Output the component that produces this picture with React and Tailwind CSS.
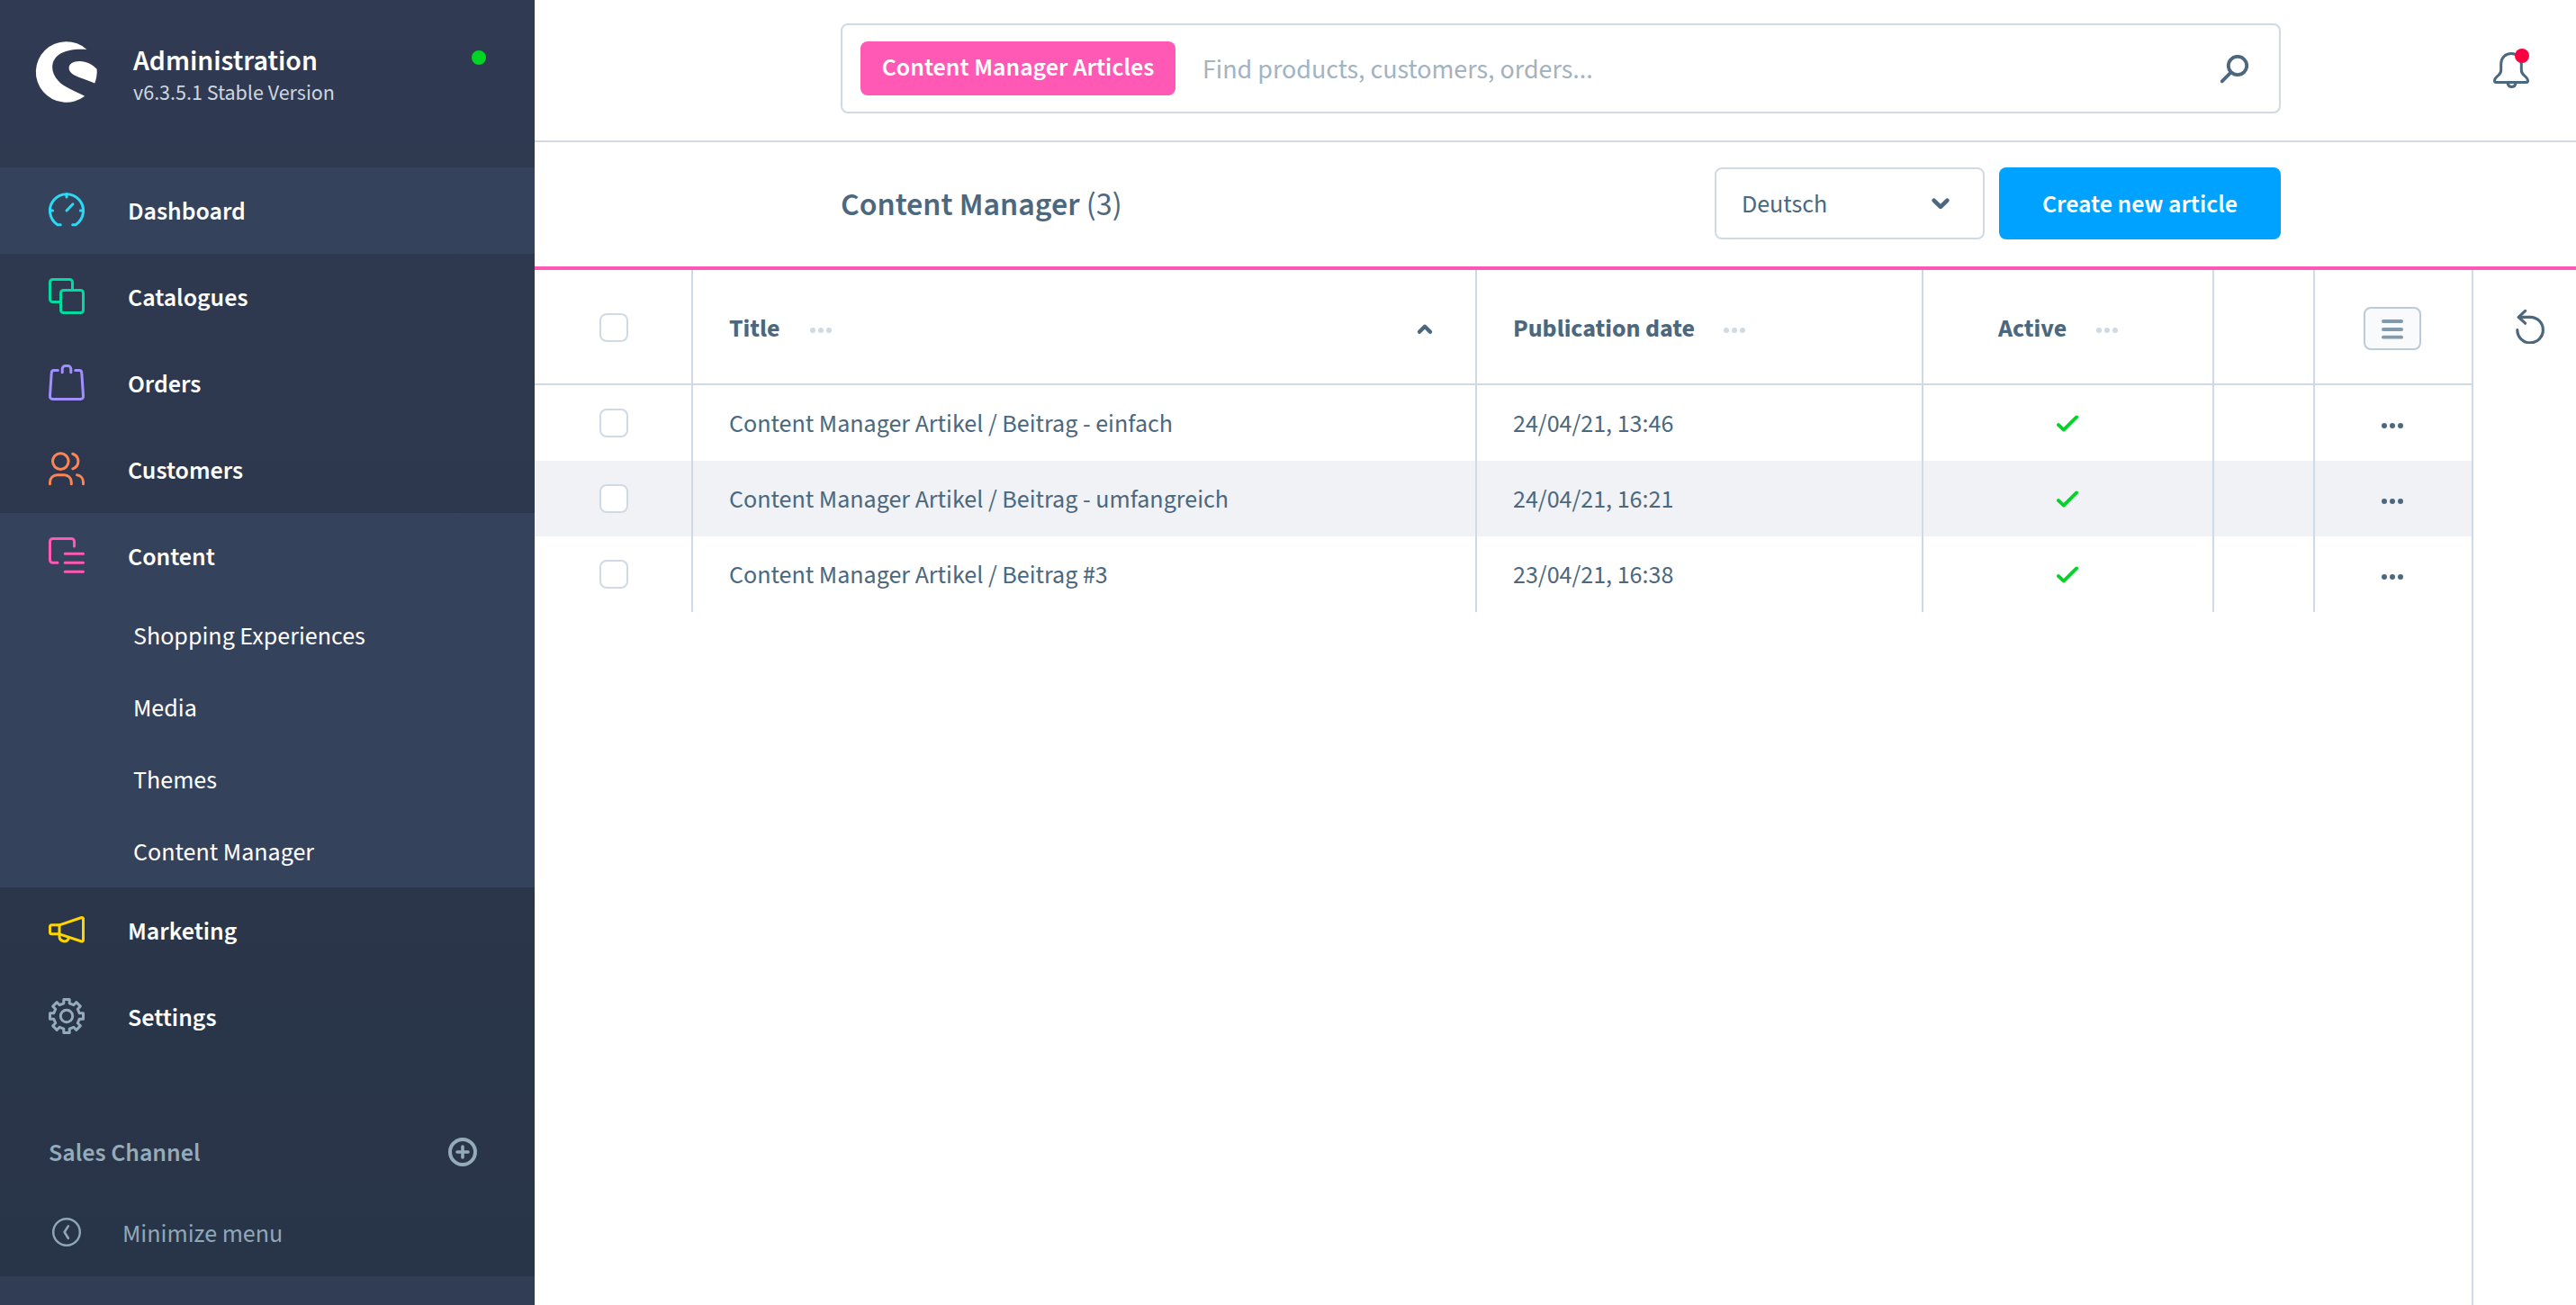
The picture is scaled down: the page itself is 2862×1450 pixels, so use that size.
import React from "react";

const gearPath = (() => {
  const base = [[-3.2, -14.2], [-3.2, -18.5], [3.2, -18.5], [3.2, -14.2]];
  const pts = [];
  for (let k = 0; k < 8; k++) {
    const a = (k * Math.PI) / 4;
    for (const [x, y] of base) {
      pts.push(
        `${(20 + x * Math.cos(a) - y * Math.sin(a)).toFixed(2)} ${(20 + x * Math.sin(a) + y * Math.cos(a)).toFixed(2)}`
      );
    }
  }
  return `M${pts.join("L")}Z`;
})();

function NavIcon({ className, children }) {
  return (
    <svg
      className={`h-10 w-10 shrink-0 ${className}`}
      viewBox="0 0 40 40"
      fill="none"
      stroke="currentColor"
      strokeWidth="3"
      strokeLinecap="round"
      strokeLinejoin="round"
    >
      {children}
    </svg>
  );
}

const icons = {
  dashboard: (
    <NavIcon className="text-[#2bd9f5]">
      <path d="M13.3 35.7H9.9A18.5 18.5 0 1 1 30.1 35.7H26.7" />
      <path d="M20 1.5V5M1.5 20H4.6M38.5 20H35.4M20 20L27 12.8" />
    </NavIcon>
  ),
  catalogues: (
    <NavIcon className="mb-[2px] text-[#00dca0]">
      <path d="M26.5 12.5V4.5a3 3 0 0 0-3-3h-19a3 3 0 0 0-3 3v19a3 3 0 0 0 3 3h8" />
      <rect x="13.5" y="13.5" width="25" height="25" rx="3" />
    </NavIcon>
  ),
  orders: (
    <NavIcon className="mb-[2px] text-[#a28fff]">
      <path d="M10.3 6.5H6.2A3 3 0 0 0 3.2 9.4L1.5 35.2a3 3 0 0 0 3 3.3h31a3 3 0 0 0 3-3.3L36.8 9.4a3 3 0 0 0-3-2.9H29.7" />
      <path d="M15.2 8.8V5a3.5 3.5 0 0 1 3.5-3.5h2.6A3.5 3.5 0 0 1 24.8 5v3.8" />
    </NavIcon>
  ),
  customers: (
    <NavIcon className="mb-[2px] text-[#ff8453]">
      <circle cx="13.3" cy="11.6" r="8.8" />
      <path d="M26.8 3.3a8.7 8.7 0 0 1 0 16.6" />
      <path d="M1.5 36.8v-2.1a8 8 0 0 1 8-8h7.8a8 8 0 0 1 8 8v2.1" />
      <path d="M31.6 26.7c4 .6 6.9 4 6.9 8v2.1" />
    </NavIcon>
  ),
  content: (
    <NavIcon className="mb-[2px] text-[#ff58b5]">
      <path d="M28.5 10V4.5a3 3 0 0 0-3-3h-21a3 3 0 0 0-3 3v20.8a3 3 0 0 0 3 3H10" />
      <path d="M18.2 18.3H38.5M18.2 28.3H38.5M18.2 38.3H38.5" />
    </NavIcon>
  ),
  marketing: (
    <NavIcon className="text-[#ffd500]">
      <path d="M12 14.4H3.5a2 2 0 0 0-2 2v6a2 2 0 0 0 2 2H12Z" transform="translate(0 -.6)" />
      <path d="M12 13.8L36.6 5.5a1.5 1.5 0 0 1 1.9 1.4V30.6a1.5 1.5 0 0 1-1.9 1.4L12 23.8" />
      <path d="M12 23.8v3.3a5.4 5.4 0 0 0 10.2 1.8" />
    </NavIcon>
  ),
  settings: (
    <NavIcon className="mb-[2px] text-[#94abb9]">
      <path d={gearPath} />
      <circle cx="20" cy="20" r="6.7" />
    </NavIcon>
  ),
};

function NavItem({ icon, label, active }) {
  return (
    <div className={`flex h-24 items-center pl-[54px] ${active ? "bg-[#34425b]" : ""}`}>
      {icons[icon]}
      <span className="ml-12 pt-[2px] text-[28px] leading-9 font-semibold text-white">{label}</span>
    </div>
  );
}

function Sidebar() {
  return (
    <aside className="flex w-[594px] shrink-0 flex-col bg-linear-to-b from-[#303a52] to-[#283447]">
      <div className="flex h-[186px] items-start pt-[46px] pl-10">
        <svg className="h-[68px] w-[68px] overflow-visible" viewBox="0 0 68 68" fill="#fff">
          <path d="M56.4 9A33.8 33.8 0 1 0 54.2 60.8C42 54.5 31 51 24.5 43.5C20.3 38.7 18.2 34 18.2 29C18.2 16 30 7.6 56.4 9Z" />
          <path d="M67.6 30.8C63 25.5 56 21.9 48.5 21.9C41 21.9 36.6 24.9 36.6 29.6C36.6 35 42 37.7 49.5 40.6C55 42.7 60.5 44.6 65.2 46.6C67.2 41.6 68.1 36.3 67.6 30.8Z" />
        </svg>
        <div className="ml-10 flex-1 pt-0.5">
          <div className="text-[32px] leading-10 font-semibold text-white">Administration</div>
          <div className="mt-px text-[24px] leading-[30px] text-[#cdd6df]">v6.3.5.1 Stable Version</div>
        </div>
        <span className="mt-[10px] mr-[54px] h-4 w-4 rounded-full bg-[#00d525]" />
      </div>
      <NavItem icon="dashboard" label="Dashboard" active />
      <NavItem icon="catalogues" label="Catalogues" />
      <NavItem icon="orders" label="Orders" />
      <NavItem icon="customers" label="Customers" />
      <div className="bg-[#34425b]">
        <NavItem icon="content" label="Content" />
        {["Shopping Experiences", "Media", "Themes", "Content Manager"].map((t) => (
          <div key={t} className="flex h-20 items-center pt-[2px] pl-[148px] text-[28px] leading-9 text-white">
            {t}
          </div>
        ))}
      </div>
      <NavItem icon="marketing" label="Marketing" />
      <NavItem icon="settings" label="Settings" />
      <div className="mt-[66px] flex h-[72px] items-center justify-between pr-[64px] pl-[54px] text-[#94abb9]">
        <span className="pt-[2px] text-[28px] leading-9 font-semibold">Sales Channel</span>
        <svg className="h-8 w-8" viewBox="0 0 32 32" fill="none" stroke="currentColor" strokeWidth="4" strokeLinecap="round">
          <circle cx="16" cy="16" r="14" />
          <path d="M16 10V22M10 16H22" strokeWidth="3.6" />
        </svg>
      </div>
      <div className="mt-[17px] flex h-[72px] items-center pl-[58px] text-[#8fa7b8]">
        <svg className="h-8 w-8" viewBox="0 0 32 32" fill="none" stroke="currentColor" strokeWidth="2.4" strokeLinecap="round" strokeLinejoin="round">
          <circle cx="16" cy="16" r="14.8" />
          <path d="M17.8 9.4L13.6 16L17.8 22.8" strokeWidth="2.6" />
        </svg>
        <span className="ml-[46px] pt-1 text-[28px] leading-9">Minimize menu</span>
      </div>
      <div className="mt-auto h-8 bg-[#313c55]" />
    </aside>
  );
}

function Dots({ className }) {
  return (
    <svg className={`h-1.5 w-6 ${className}`} viewBox="0 0 24 6" fill="currentColor">
      <circle cx="3" cy="3" r="3" />
      <circle cx="12" cy="3" r="3" />
      <circle cx="21" cy="3" r="3" />
    </svg>
  );
}

function Checkbox() {
  return <span className="ml-[72px] block h-8 w-8 rounded-lg border-2 border-[#d0dae4] bg-white" />;
}

function TopBar() {
  return (
    <header className="flex h-[158px] items-start border-b-2 border-[#d0dae4] pt-[26px] pl-[340px]">
      <div className="flex h-[100px] w-[1600px] items-start rounded-lg border-2 border-[#d0dae4] pt-[18px] pl-5">
        <span className="flex h-[60px] w-[350px] items-center justify-center rounded-lg bg-[#ff58b5] pb-[2px] text-[28px] leading-9 font-semibold text-white">
          Content Manager Articles
        </span>
        <span className="mt-[14px] ml-[30px] flex-1 text-[30px] leading-9 text-[#a3b3c1]">Find products, customers, orders...</span>
        <svg className="mt-[15px] mr-[34px] h-8 w-8" viewBox="0 0 32 32" fill="none" stroke="#4c687e" strokeWidth="3.8" strokeLinecap="round">
          <circle cx="20" cy="12" r="10.2" />
          <path d="M12.4 19.6L2.7 29.3" />
        </svg>
      </div>
      <div className="relative mt-8 ml-[236px] h-10 w-10">
        <svg className="h-10 w-10" viewBox="0 0 40 40" fill="none" stroke="#4c687e" strokeWidth="3" strokeLinejoin="round">
          <path d="M20 1.5C13.5 1.5 8.7 6.5 8.7 13v6.5c0 3-.9 4.5-2.9 6.2C3 28 1.5 29.5 1.5 31.8c0 1.2.6 1.7 1.7 1.7h33.6c1.1 0 1.7-.5 1.7-1.7 0-2.3-1.5-3.8-4.3-6.1-2-1.7-2.9-3.2-2.9-6.2V13C31.3 6.5 26.5 1.5 20 1.5Z" />
          <path d="M16.2 34.5c.3 2.3 2 3.9 4.4 3.9s4.1-1.6 4.4-3.9" />
        </svg>
        <span className="absolute -top-1 left-6 h-4 w-4 rounded-full bg-[#f90043]" />
      </div>
    </header>
  );
}

function SmartBar() {
  return (
    <div className="flex h-[142px] items-start border-b-4 border-[#ff58b5] pt-7 pr-[328px] pl-[340px]">
      <h1 className="flex-1 pt-[19px] text-[36px] leading-[46px] font-semibold text-[#4c687e]">
        Content Manager <span className="font-normal">(3)</span>
      </h1>
      <div className="flex h-20 w-[300px] items-center justify-between rounded-lg border-2 border-[#d0dae4] pr-[35px] pl-7 text-[28px] leading-9 text-[#4c687e]">
        <span className="pt-[2px]">Deutsch</span>
        <svg className="h-6 w-6" viewBox="0 0 24 24" fill="none" stroke="currentColor" strokeWidth="4.6" strokeLinecap="round" strokeLinejoin="round">
          <path d="M4.6 8.6L12 15.8L19.4 8.6" />
        </svg>
      </div>
      <button className="ml-4 h-20 w-[313px] rounded-lg bg-[#00a2ff] pt-[2px] text-[28px] leading-9 font-semibold text-white">
        Create new article
      </button>
    </div>
  );
}

const rows = [
  ["Content Manager Artikel / Beitrag - einfach", "24/04/21, 13:46"],
  ["Content Manager Artikel / Beitrag - umfangreich", "24/04/21, 16:21"],
  ["Content Manager Artikel / Beitrag #3", "23/04/21, 16:38"],
];

const cell = "flex items-center border-r-2 border-[#d0dae4]";
const grid = "grid grid-cols-[176px_871px_496px_323px_112px_174px]";

function Table() {
  return (
    <div className="w-[2152px] shrink-0 text-[28px] leading-9 text-[#4c687e]">
      <div className={`${grid} h-32 border-b-2 border-[#d0dae4] font-bold`}>
        <div className={`${cell} pt-[2px]`}><Checkbox /></div>
        <div className={`${cell} pr-11 pl-10`}>
          <span className="pt-1">Title</span>
          <Dots className="mt-2 ml-[33px] text-[#d0dae4]" />
          <svg className="mt-1.5 ml-auto h-6 w-6" viewBox="0 0 24 24" fill="none" stroke="currentColor" strokeWidth="4.4" strokeLinecap="round" strokeLinejoin="round">
            <path d="M6 14.8L12 8.8L18 14.8" />
          </svg>
        </div>
        <div className={`${cell} pl-10`}>
          <span className="pt-1">Publication date</span>
          <Dots className="mt-2 ml-8 text-[#d0dae4]" />
        </div>
        <div className={`${cell} pl-[83px]`}>
          <span className="pt-1">Active</span>
          <Dots className="mt-2 ml-[33px] text-[#d0dae4]" />
        </div>
        <div className={cell} />
        <div className="flex items-center pt-1 pl-[54px]">
          <span className="flex h-12 w-16 items-center justify-center rounded-lg border-2 border-[#bccad9] bg-[#f9fafb]">
            <svg className="h-6 w-6" viewBox="0 0 24 24" stroke="#829aae" strokeWidth="3.8" strokeLinecap="round">
              <path d="M1.9 5H22.1M1.9 14H22.1M1.9 22.7H22.1" transform="translate(0 -1)" />
            </svg>
          </span>
        </div>
      </div>
      {rows.map(([title, date], i) => (
        <div key={title} className={`${grid} h-21 ${i === 1 ? "bg-[#f0f2f6]" : ""}`}>
          <div className={cell}><Checkbox /></div>
          <div className={`${cell} pt-[2px] pl-10`}>{title}</div>
          <div className={`${cell} pt-[2px] pl-10`}>{date}</div>
          <div className={`${cell} justify-center pr-px`}>
            <svg className="h-6 w-6" viewBox="0 0 24 24" fill="none" stroke="#00d525" strokeWidth="3.8" strokeLinecap="round" strokeLinejoin="round">
              <path d="M1.9 14L7.8 19.6L22.1 5.4" />
            </svg>
          </div>
          <div className={cell} />
          <div className="flex items-center pt-[6px] pl-[74px]"><Dots className="" /></div>
        </div>
      ))}
    </div>
  );
}

export default function App() {
  return (
    <div className="flex h-[1450px] w-[2862px] overflow-hidden bg-white font-['Source_Sans_3','Noto_Sans_CJK_SC',sans-serif]">
      <Sidebar />
      <main className="flex min-w-0 flex-1 flex-col">
        <TopBar />
        <SmartBar />
        <div className="flex flex-1">
          <Table />
          <div className="flex-1 border-l-2 border-[#d0dae4] pt-[42px] pl-[46px]">
            <svg className="h-10 w-9" viewBox="0 0 36 40" fill="none" stroke="#4c687e" strokeWidth="3.2" strokeLinecap="round" strokeLinejoin="round">
              <path d="M2.8 24.7A14.3 14.3 0 1 0 17 10.3H4.4" />
              <path d="M11.6 3.4L4.2 10.3L11.6 17.2" />
            </svg>
          </div>
        </div>
      </main>
    </div>
  );
}
